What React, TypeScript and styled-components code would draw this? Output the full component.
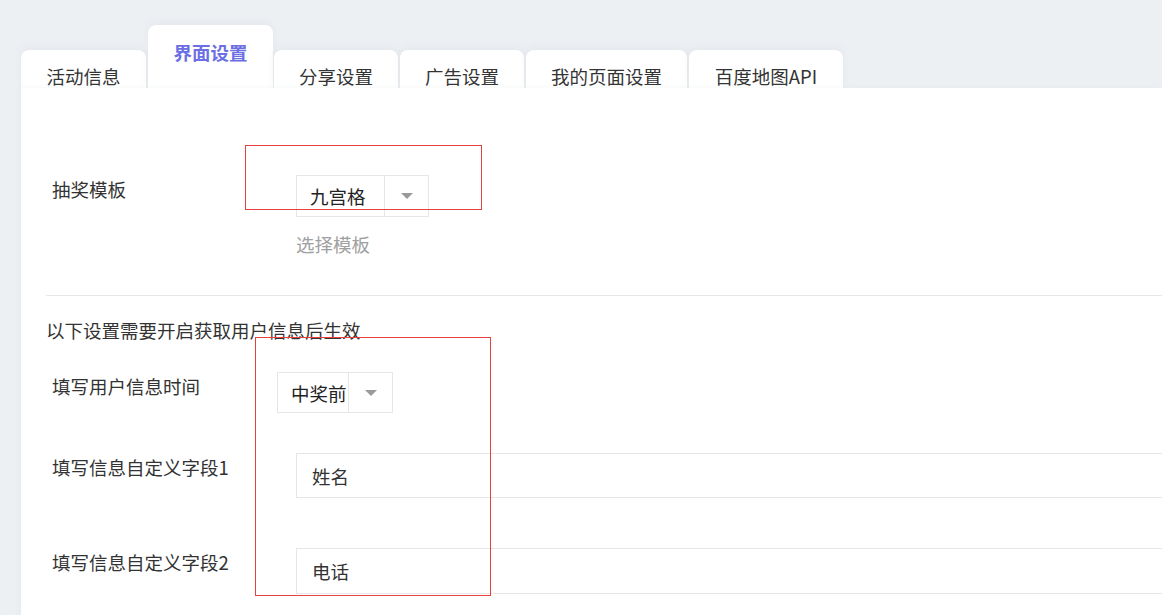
import React from "react";
import styled, { createGlobalStyle } from "styled-components";

const GlobalStyle = createGlobalStyle`
  html, body {
    margin: 0;
    padding: 0;
    background: #edf0f3;
    font-family: "Noto Sans CJK SC", "Noto Sans", sans-serif;
    color: #333;
    overflow: hidden;
  }
`;

const Page = styled.div`
  position: relative; // overlays are placed on this
  height: 615px;
  padding: 25px 0 0 21px;
  box-sizing: border-box;
  overflow: hidden;
`;

const TabBar = styled.div`
  display: flex;
  align-items: flex-end;
  gap: 1px;
  height: 63px;
`;

const Tab = styled.div<{ $active?: boolean; $w: number }>`
  width: ${(p) => p.$w}px;
  height: ${(p) => (p.$active ? 63 : 38)}px;
  box-sizing: border-box;
  padding-top: ${(p) => (p.$active ? 15 : 14)}px;
  margin-right: ${(p) => (p.$active ? 0 : 1)}px;
  background: #fff;
  border-radius: 8px 8px 0 0;
  box-shadow: 0 -2px 6px rgba(200, 205, 215, 0.25);
  text-align: center;
  font-size: 18.5px;
  line-height: 24px;
  font-weight: ${(p) => (p.$active ? 700 : 400)};
  color: ${(p) => (p.$active ? "#6b6fe3" : "#333")};
`;

const Panel = styled.div`
  display: flow-root; // keep child margins inside
  background: #fff;
  height: 527px;
  box-shadow: -2px 0 6px rgba(200, 205, 215, 0.2);
  position: relative;
`;

const Row = styled.div<{ $top: number }>`
  display: flex;
  align-items: flex-start;
  margin-top: ${(p) => p.$top}px;
`;

const Label = styled.div<{ $w?: number }>`
  width: ${(p) => p.$w ?? 275}px;
  flex-shrink: 0;
  box-sizing: border-box;
  padding: 1px 0 0 31px;
  font-size: 18.5px;
  line-height: 26px;
  color: #333;
`;

const Control = styled.div`
  display: flex;
  flex-direction: column;
  flex: 1;
  min-width: 0;
`;

const Select = styled.div<{ $h: number }>`
  display: flex;
  align-self: flex-start;
  height: ${(p) => p.$h}px;
  border: 1px solid #e6e6e6;
  box-sizing: border-box;
`;

const SelectValue = styled.div<{ $w: number }>`
  width: ${(p) => p.$w}px;
  box-sizing: border-box;
  padding-left: 13px;
  display: flex;
  align-items: center;
  font-size: 18.5px;
  color: #222;
  border-right: 1px solid #e6e6e6;
`;

const Arrow = styled.div`
  width: 43px;
  display: flex;
  align-items: center;
  justify-content: center;
  &::after {
    content: "";
    border-left: 6px solid transparent;
    border-right: 6px solid transparent;
    border-top: 6px solid #9a9a9a;
  }
`;

const Hint = styled.div`
  margin-top: 14px;
  font-size: 18.5px;
  line-height: 26px;
  color: #a0a0a0;
`;

const Divider = styled.div`
  margin: 38px 0 0 25px;
  border-top: 1px solid #e6e6e6;
`;

const Notice = styled.div`
  margin: 21px 0 0 25px;
  font-size: 18.5px;
  line-height: 26px;
  color: #333;
`;

const TextInput = styled.div<{ $h: number }>`
  height: ${(p) => p.$h}px;
  width: 1000px;
  box-sizing: border-box;
  border: 1px solid #e6e6e6;
  display: flex;
  align-items: center;
  padding-left: 15px;
  font-size: 18.5px;
  color: #333;
`;

const Outline = styled.div<{ $x: number; $y: number; $w: number; $h: number }>`
  position: absolute;
  left: ${(p) => p.$x}px;
  top: ${(p) => p.$y}px;
  width: ${(p) => p.$w}px;
  height: ${(p) => p.$h}px;
  border: 1px solid #e8403f;
  box-sizing: border-box;
  pointer-events: none;
`;

const tabs = [
  { label: "活动信息", w: 125 },
  { label: "界面设置", w: 125, active: true },
  { label: "分享设置", w: 124 },
  { label: "广告设置", w: 124 },
  { label: "我的页面设置", w: 161 },
  { label: "百度地图API", w: 154 },
];

export default function App() {
  return (
    <>
      <GlobalStyle />
      <Page>
        <TabBar>
          {tabs.map((t) => (
            <Tab key={t.label} $w={t.w} $active={t.active}>
              {t.label}
            </Tab>
          ))}
        </TabBar>
        <Panel>
          <Row $top={87}>
            <Label>抽奖模板</Label>
            <Control>
              <Select $h={42}>
                <SelectValue $w={88}>九宫格</SelectValue>
                <Arrow />
              </Select>
              <Hint>选择模板</Hint>
            </Control>
          </Row>
          <Divider />
          <Notice>以下设置需要开启获取用户信息后生效</Notice>
          <Row $top={29}>
            <Label $w={256}>填写用户信息时间</Label>
            <Control>
              <Select $h={41}>
                <SelectValue $w={71}>中奖前</SelectValue>
                <Arrow />
              </Select>
            </Control>
          </Row>
          <Row $top={40}>
            <Label>填写信息自定义字段1</Label>
            <Control>
              <TextInput $h={45}>姓名</TextInput>
            </Control>
          </Row>
          <Row $top={50}>
            <Label>填写信息自定义字段2</Label>
            <Control>
              <TextInput $h={46}>电话</TextInput>
            </Control>
          </Row>
        </Panel>
        <Outline $x={245} $y={145} $w={237} $h={65} />
        <Outline $x={255} $y={337} $w={236} $h={259} />
      </Page>
    </>
  );
}
